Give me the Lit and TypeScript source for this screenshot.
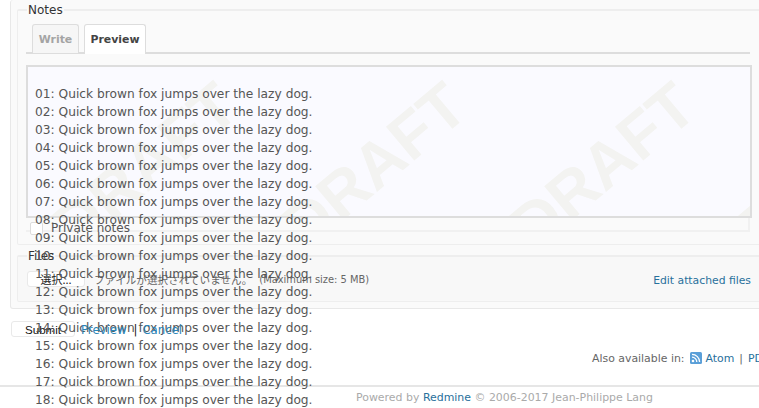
import { LitElement, html, css, svg } from "lit";
import { customElement } from "lit/decorators.js";

const lines = Array.from({ length: 18 }, (_, i) => `${String(i + 1).padStart(2, "0")}: Quick brown fox jumps over the lazy dog.`);

@customElement("app-root")
export class AppRoot extends LitElement {
  static styles = css`
    :host { display: block; width: 759px; height: 408px; overflow: hidden; position: relative; background: #fff;
      font-family: "DejaVu Sans", Verdana, sans-serif; font-size: 12px; color: #484848; }
    a { color: #169; text-decoration: none; }
    .outer { margin: 0 -10px 0 10px; height: 309px; box-sizing: border-box; background: #fafafa; border: 1px solid #e8e8e8; border-top: 0; border-radius: 3px; padding: 4px 6px 0 6px; }
    fieldset { margin: 0; min-width: 0; border: 1px solid #eee; border-top-width: 2px; border-radius: 2px; padding: 0; box-sizing: border-box; position: relative; }
    legend { font-size: 12px; color: #333; padding: 0 1px; margin-left: 1px; line-height: 1; }
    .notes { height: 241px; padding: 0 8px; }
    .editor { margin: 8px 3px 0 0; }
    .tabs { display: flex; gap: 5px; height: 28px; padding-left: 6px; border-bottom: 2px solid #ddd; }
    .tab { box-sizing: border-box; width: 47px; height: 29px; border: 1px solid #ddd; border-bottom: 0; border-radius: 3px 3px 0 0; font-weight: bold; font-size: 10.9px; text-align: center; padding-top: 8px; color: #a4a4a4; background: #f6f6f6; }
    .tab.on { width: 62px; color: #444; background: #fff; position: relative; z-index: 1; height: 30px; }
    .preview { margin: 11px -2px 0 0; height: 153px; box-sizing: border-box; border: 2px solid #ddd; background: #fafaff; padding: 10px 7px 0; position: relative; }
    .ledge { box-sizing: border-box; height: 14px; border-right: 2px solid #f1f1f1; border-bottom: 2px solid #f1f1f1; }
    .wm { position: absolute; inset: 0; width: 100%; height: 100%; }
    .text { position: relative; z-index: 1; font-size: 12.23px; line-height: 18px; color: #555; white-space: nowrap; padding-top: 8px; }
    .private { display: flex; align-items: center; gap: 8px; margin: -10px 0 0 4px; height: 13px; font-size: 12px; color: #555; position: relative; }
    .private span:last-child { position: relative; top: -1px; }
    .check { width: 11px; height: 11px; border: 1px solid #ddd; background: #fff; border-radius: 2px; }
    .files { margin-top: 5px; height: 52px; background: #f8f8f8; }
    .files legend { margin-left: 9px; }
    .filerow { display: flex; align-items: center; padding: 9px 10px 0 9px; height: 16px; }
    .btn { box-sizing: border-box; background: #fff; border: 1px solid #e9e9e9; border-radius: 3px; color: #222; text-align: center; line-height: 15px; }
    .choose { width: 58px; height: 16px; font-family: "Noto Sans CJK JP", sans-serif; font-size: 11px; }
    .none { margin-left: 9px; font-family: "Noto Sans CJK JP", sans-serif; font-size: 10.6px; color: #666; }
    .max { margin-left: 7px; font-size: 9.9px; color: #666; }
    .edit { margin: 2px 0 0 auto; font-size: 10.8px; color: #28709c; }
    .actions { display: flex; align-items: center; height: 18px; margin: 12px 0 0 11px; font-size: 11.7px; }
    .submit { align-self: flex-start; width: 64px; height: 16px; font-family: "Liberation Sans", Arial, sans-serif; font-size: 11.6px; color: #111; }
    .actions a { color: #2a84b8; position: relative; z-index: 2; }
    .actions .first { margin-left: 6px; }
    .sep { margin: 0 5px 0 7px; color: #222; position: relative; z-index: 2; }
    .also { display: flex; align-items: center; margin: 11px 0 0; height: 16px; padding-left: 592px; font-size: 10.9px; color: #666; white-space: nowrap; }
    .also svg { margin: 0 4px 0 5px; flex: none; }
    .also a { color: #28709c; }
    .also i { font-style: normal; margin: 0 5px; }
    .footer { position: absolute; left: 0; right: 0; top: 385px; height: 23px; border-top: 2px solid #e6e6e6; box-sizing: border-box; padding-left: 356px; line-height: 22px; font-size: 10.95px; color: #aaa; white-space: nowrap; }
    .footer a { color: #28709c; }
  `;

  private watermark() {
    return svg`<svg class="wm" xmlns="http://www.w3.org/2000/svg">
      <defs><pattern id="d" width="229" height="229" patternUnits="userSpaceOnUse">
        <text transform="translate(214 46) rotate(-40)" text-anchor="end" font-family="Liberation Sans" font-weight="bold" font-size="64" fill="#f3f3f1">DRAFT</text>
      </pattern></defs><rect width="100%" height="100%" fill="url(#d)"/></svg>`;
  }

  render() {
    return html`
      <div class="outer">
        <fieldset class="notes">
          <legend>Notes</legend>
          <div class="editor">
            <div class="tabs"><div class="tab">Write</div><div class="tab on">Preview</div></div>
            <div class="preview">${this.watermark()}
              <div class="text">${lines.map((l) => html`<div>${l}</div>`)}</div>
            </div>
            <div class="ledge"></div>
          </div>
          <div class="private"><span class="check"></span><span>Private notes</span></div>
        </fieldset>
        <fieldset class="files">
          <legend>Files</legend>
          <div class="filerow">
            <span class="btn choose">選択...</span>
            <span class="none">ファイルが選択されていません。</span>
            <span class="max">(Maximum size: 5 MB)</span>
            <a class="edit">Edit attached files</a>
          </div>
        </fieldset>
      </div>
      <div class="actions">
        <span class="btn submit">Submit</span>
        <a class="first">Preview</a><span class="sep">|</span><a>Cancel</a>
      </div>
      <div class="also">Also available in:
        <svg width="12" height="12" viewBox="0 0 12 12"><rect width="12" height="12" rx="1.5" fill="#5a9fd8"/><circle cx="3" cy="9" r="1.3" fill="#fff"/><path d="M2 5.2a4.8 4.8 0 0 1 4.8 4.8M2 2.4A7.6 7.6 0 0 1 9.6 10" fill="none" stroke="#fff" stroke-width="1.3"/></svg>
        <a>Atom</a><i>|</i><a>PDF</a>
      </div>
      <div class="footer">Powered by <a>Redmine</a> © 2006-2017 Jean-Philippe Lang</div>
    `;
  }
}
